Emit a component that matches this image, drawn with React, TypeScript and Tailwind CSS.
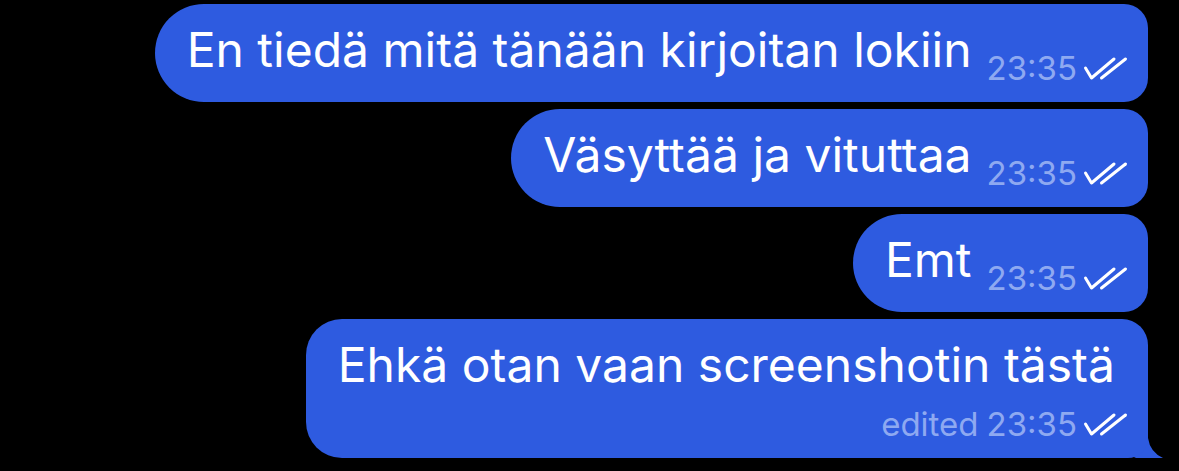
import React from "react";

type Msg = { text: string; time: string; edited?: boolean; last?: boolean };

const messages: Msg[] = [
  { text: "En tiedä mitä tänään kirjoitan lokiin", time: "23:35" },
  { text: "Väsyttää ja vituttaa", time: "23:35" },
  { text: "Emt", time: "23:35" },
  { text: "Ehkä otan vaan screenshotin tästä", time: "23:35", edited: true, last: true },
];

const Checks = () => (
  <svg width="46" height="26" viewBox="0 0 46 26" fill="none" className="shrink-0">
    <path d="M2.5 12 L8.5 22 L31 3" stroke="white" strokeWidth="3" strokeLinecap="round" strokeLinejoin="round" />
    <path d="M18.5 22 L42.5 3" stroke="white" strokeWidth="3" strokeLinecap="round" />
  </svg>
);

const Meta = ({ msg }: { msg: Msg }) => (
  <span className="flex items-center gap-[6px] text-[33px] leading-none text-[#8ea9f1] whitespace-nowrap">
    {msg.edited && <span className="mr-[2px]">edited</span>}
    <span>{msg.time}</span>
    <Checks />
  </span>
);

const Bubble = ({ msg }: { msg: Msg }) => {
  if (msg.last) {
    return (
      <div className="relative">
        {/* tail sits under the bubble content */}
        <svg className="absolute -right-[15px] bottom-0" width="43" height="40" viewBox="0 0 43 40">
          <path
            d="M0 40 Q5 40 8 33 Q10 38 16 40 L43 40 Q30 34 28 20 L28 0 L0 0 Z"
            fill="#2e5be0"
          />
        </svg>
        <div className="relative bg-[#2e5be0] rounded-l-[36px] rounded-tr-[26px] rounded-br-[20px] pl-[32px] pr-[33px] pt-[17px] pb-[17px] flex flex-col items-end">
          <span className="text-[48px] leading-[58px] text-white whitespace-nowrap self-start">
            {msg.text}
          </span>
          <div className="mt-[14px] -mr-[14px]">
            <Meta msg={msg} />
          </div>
        </div>
      </div>
    );
  }
  return (
    <div className="bg-[#2e5be0] rounded-l-[49px] rounded-r-[24px] h-[98px] pl-[32px] pr-[19px] flex items-start">
      <span className="text-[48px] leading-[58px] text-white whitespace-nowrap mt-[17px]">
        {msg.text}
      </span>
      <div className="ml-[15px] mt-[48px]">
        <Meta msg={msg} />
      </div>
    </div>
  );
};

export default function App() {
  return (
    <div
      className="w-[1179px] h-[471px] bg-black overflow-hidden flex flex-col items-end gap-[7px] pt-[4px] pr-[31px]"
      style={{ fontFamily: "Inter, 'Noto Sans', sans-serif" }}
    >
      {messages.map((m, i) => (
        <Bubble key={i} msg={m} />
      ))}
    </div>
  );
}
